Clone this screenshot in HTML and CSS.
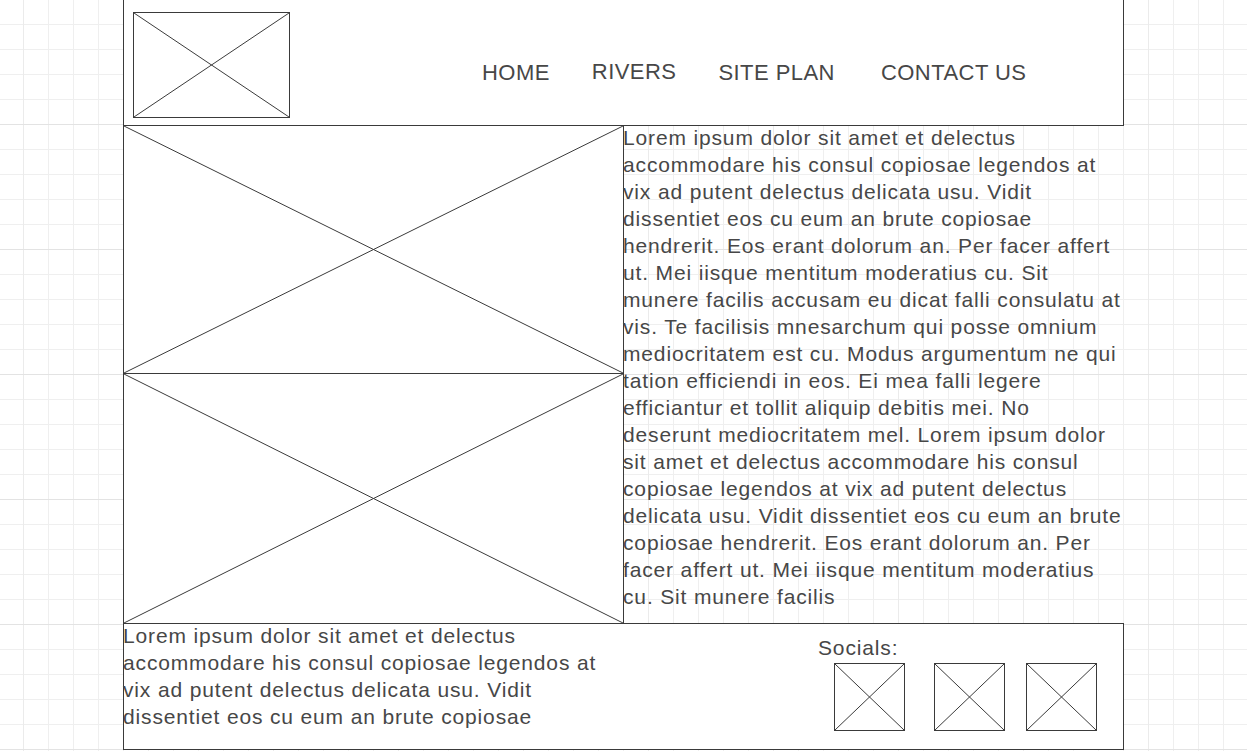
FILE: index.html
```html
<!DOCTYPE html>
<html lang="en">
<head>
    <meta charset="UTF-8">
    <meta name="viewport" content="width=device-width, initial-scale=1.0">
    <title>Rivers - wireframe</title>
    <link rel="stylesheet" href="styles.css">
</head>
<body>
    <div class="page">
        <!-- Header -->
        <header class="header">
            <div class="placeholder logo">
                <svg viewBox="0 0 100 100" preserveAspectRatio="none"><line x1="0" y1="0" x2="100" y2="100"/><line x1="100" y1="0" x2="0" y2="100"/></svg>
            </div>
            <nav class="nav">
                <a href="#" class="nav-link">HOME</a>
                <a href="#" class="nav-link nav-link-raised">RIVERS</a>
                <a href="#" class="nav-link">SITE PLAN</a>
                <a href="#" class="nav-link nav-link-last">CONTACT US</a>
            </nav>
        </header>

        <!-- Main content -->
        <main class="main">
            <div class="images">
                <div class="placeholder picture">
                    <svg viewBox="0 0 100 100" preserveAspectRatio="none"><line x1="0" y1="0" x2="100" y2="100"/><line x1="100" y1="0" x2="0" y2="100"/></svg>
                </div>
                <div class="placeholder picture picture-second">
                    <svg viewBox="0 0 100 100" preserveAspectRatio="none"><line x1="0" y1="0" x2="100" y2="100"/><line x1="100" y1="0" x2="0" y2="100"/></svg>
                </div>
            </div>
            <p class="body-text">Lorem ipsum dolor sit amet et delectus accommodare his consul copiosae legendos at vix ad putent delectus delicata usu. Vidit dissentiet eos cu eum an brute copiosae hendrerit. Eos erant dolorum an. Per facer affert ut. Mei iisque mentitum moderatius cu. Sit munere facilis accusam eu dicat falli consulatu at vis. Te facilisis mnesarchum qui posse omnium mediocritatem est cu. Modus argumentum ne qui tation efficiendi in eos. Ei mea falli legere efficiantur et tollit aliquip debitis mei. No deserunt mediocritatem mel. Lorem ipsum dolor sit amet et delectus accommodare his consul copiosae legendos at vix ad putent delectus delicata usu. Vidit dissentiet eos cu eum an brute copiosae hendrerit. Eos erant dolorum an. Per facer affert ut. Mei iisque mentitum moderatius cu. Sit munere facilis</p>
        </main>

        <!-- Footer -->
        <footer class="footer">
            <p class="footer-text">Lorem ipsum dolor sit amet et delectus accommodare his consul copiosae legendos at vix ad putent delectus delicata usu. Vidit dissentiet eos cu eum an brute copiosae</p>
            <div class="socials">
                <span class="socials-label">Socials:</span>
                <div class="socials-icons">
                    <div class="placeholder social">
                        <svg viewBox="0 0 100 100" preserveAspectRatio="none"><line x1="0" y1="0" x2="100" y2="100"/><line x1="100" y1="0" x2="0" y2="100"/></svg>
                    </div>
                    <div class="placeholder social">
                        <svg viewBox="0 0 100 100" preserveAspectRatio="none"><line x1="0" y1="0" x2="100" y2="100"/><line x1="100" y1="0" x2="0" y2="100"/></svg>
                    </div>
                    <div class="placeholder social">
                        <svg viewBox="0 0 100 100" preserveAspectRatio="none"><line x1="0" y1="0" x2="100" y2="100"/><line x1="100" y1="0" x2="0" y2="100"/></svg>
                    </div>
                </div>
            </div>
        </footer>
    </div>
</body>
</html>
```

FILE: styles.css
```css
* {
    margin: 0;
    padding: 0;
    box-sizing: border-box;
}

body {
    height: 751px;
    overflow: hidden;
    font-family: "Liberation Sans", Arial, sans-serif;
    color: #474747;
    background-color: #ffffff;
    background-image:
        linear-gradient(#e3e3e3 1px, transparent 1px),
        linear-gradient(90deg, #ebebeb 1px, transparent 1px),
        linear-gradient(#efefef 1px, transparent 1px),
        linear-gradient(90deg, #efefef 1px, transparent 1px);
    background-size: 125px 125px, 125px 125px, 25px 25px, 25px 25px;
    background-position: 0 124px, 23px 0, 0 24px, 23px 0;
}

.page {
    width: 1001px;
    margin-left: 123px;
    display: flex;
    flex-direction: column;
}

/* Wireframe image placeholder */
.placeholder {
    background: #fff;
    border: 1px solid #3a3a3a;
}

.placeholder svg {
    display: block;
    width: 100%;
    height: 100%;
}

.placeholder line {
    stroke: #3a3a3a;
    stroke-width: 1;
    vector-effect: non-scaling-stroke;
}

.header {
    height: 126px;
    background: #fff;
    border: 1px solid #3a3a3a;
    border-top: none;
    display: flex;
    align-items: flex-start;
    padding: 12px 0 0 9px;
}

.logo {
    width: 157px;
    height: 106px;
}

.nav {
    display: flex;
    align-items: center;
    gap: 42px;
    margin: 48px 0 0 192px;
}

.nav-link {
    color: #474747;
    text-decoration: none;
    font-size: 22px;
    letter-spacing: 0.45px;
    line-height: 26px;
}

.nav-link-raised {
    margin-top: -3px;
}

.nav-link-last {
    margin-left: 4px;
}

.main {
    display: flex;
    margin-top: -1px;
}

.images {
    width: 501px;
    flex-shrink: 0;
    display: flex;
    flex-direction: column;
}

.picture {
    height: 249px;
}

.picture-second {
    margin-top: -1px;
    height: 251px;
}

.body-text {
    width: 502px;
    margin: -1px 0 0 -1px;
    font-size: 21px;
    letter-spacing: 0.85px;
    line-height: 27px;
}

.footer {
    height: 127px;
    margin-top: -1px;
    background: #fff;
    border: 1px solid #3a3a3a;
    display: flex;
    justify-content: space-between;
}

.footer-text {
    width: 495px;
    margin: -2px 0 0 -1px;
    font-size: 21px;
    letter-spacing: 0.85px;
    line-height: 27px;
}

.socials {
    width: 305px;
    padding-top: 12px;
}

.socials-label {
    display: block;
    font-size: 21px;
    letter-spacing: 0.85px;
    line-height: 24px;
}

.socials-icons {
    display: flex;
    gap: 29px;
    margin: 3px 0 0 16px;
}

.social {
    width: 71px;
    height: 68px;
}

.social + .social + .social {
    margin-left: -8px;
}
```
